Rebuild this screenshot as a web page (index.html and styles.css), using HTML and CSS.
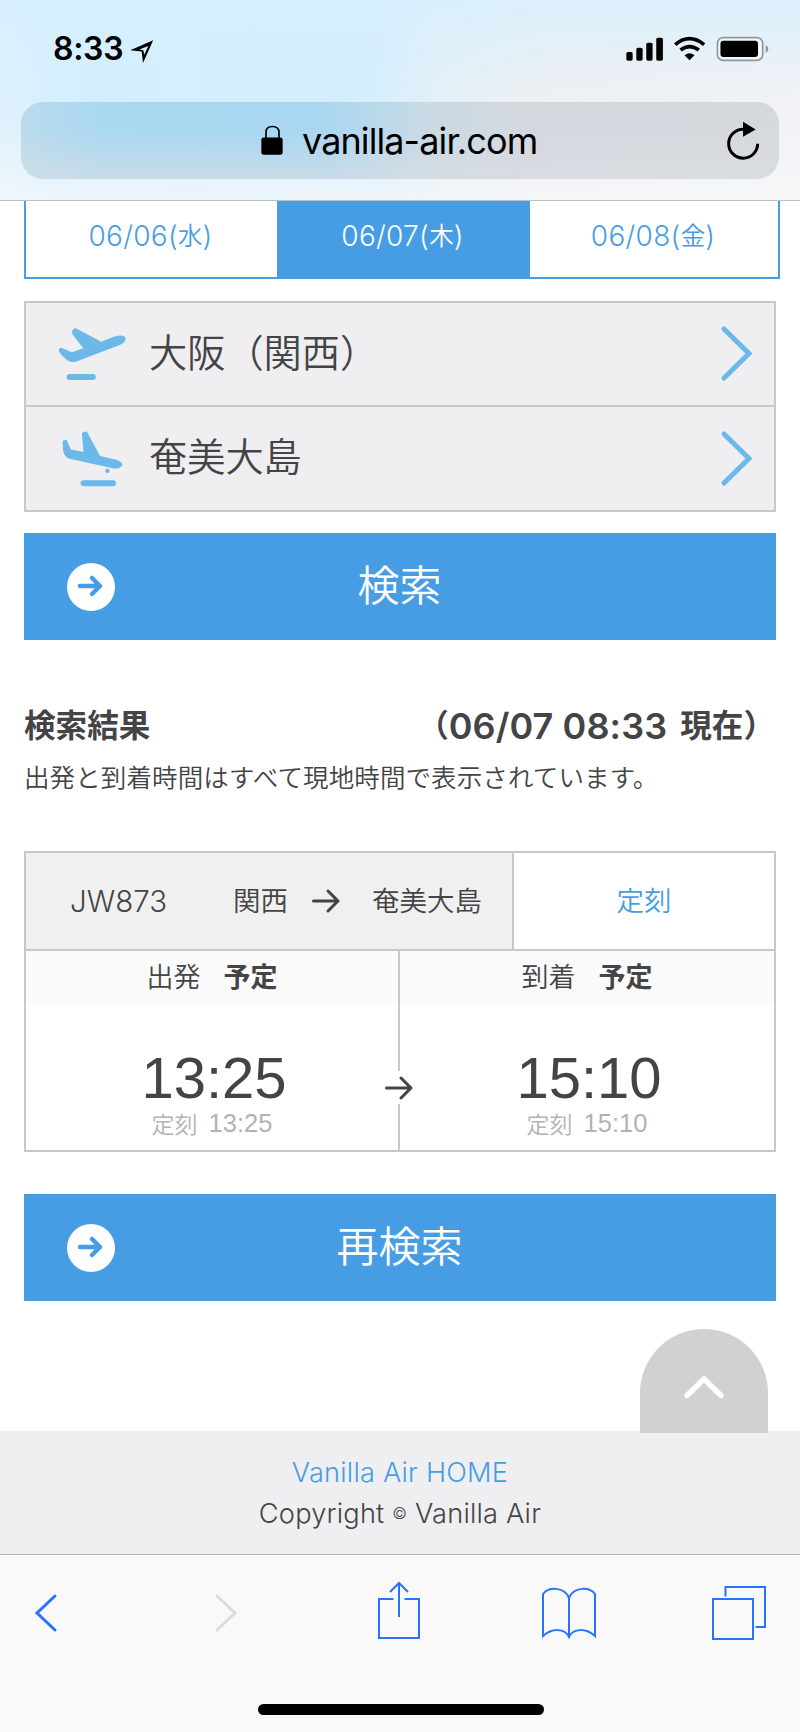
FILE: index.html
```html
<!DOCTYPE html>
<html lang="ja">
<head>
<meta charset="utf-8">
<title>Vanilla Air</title>
<link rel="stylesheet" href="styles.css">
</head>
<body>
<header class="browser-top">
  <div class="status">
    <div class="status-left">
      <span class="clock">8:33</span>
      <svg class="location" viewBox="390 118 72 70"><path fill-rule="evenodd" d="M390 149L460 119L429 188L425 153ZM418 147L430 149L433 163L445 136Z"/></svg>
    </div>
    <svg class="status-icons" viewBox="678 108 430 78">
      <rect x="679" y="156" width="19" height="26" rx="5"/><rect x="709" y="143" width="19" height="39" rx="5"/><rect x="739" y="128" width="19" height="54" rx="5"/><rect x="769" y="113" width="20" height="69" rx="5"/>
      <path class="wifi" d="M826 134Q869 98 913 134M842 150Q869 129 897 150"/>
      <path d="M854 166Q869 154 884 166L869 181Z"/>
      <rect class="battery" x="953" y="113" width="136" height="68" rx="17"/><rect x="962" y="122" width="113" height="49" rx="9"/>
      <path class="battery-tip" d="M1098 135Q1106 139 1106 147Q1106 155 1098 159Z"/>
    </svg>
  </div>
  <div class="address">
    <svg class="lock" viewBox="782 374 66 92"><rect x="783" y="411" width="64" height="52" rx="7"/><path d="M797 413V396Q797 378 816 378Q836 378 836 396V413"/></svg>
    <span class="url">vanilla-air.com</span>
    <svg class="reload" viewBox="980 364 102 116"><path class="ring" d="M1031 388A43.500 43.500 0 1 0 1075 432"/><path d="M1031 366L1069 389L1031 411Z"/></svg>
  </div>
</header>

<main class="page">
  <nav class="dates">
    <a class="date"><span class="num">06/06(</span>水<span class="num">)</span></a>
    <a class="date selected"><span class="num">06/07(</span>木<span class="num">)</span></a>
    <a class="date"><span class="num">06/08(</span>金<span class="num">)</span></a>
  </nav>

  <section class="route">
    <div class="airport">
      <svg class="plane" viewBox="165 108 220 168"><path d="M217 130Q214 119 224 115Q228 114 232 117L304 155L344 139Q374 131 378 145Q379 156 360 165L228 215Q215 219 204 212Q184 198 177 184Q175 174 184 173L216 187L250 175L217 132Z"/><rect x="200" y="252" width="88" height="18" rx="9"/></svg>
      <span>大阪（関西）</span>
      <svg class="chevron" viewBox="0 0 30 54"><path d="M2 2L27 26.500L2 51"/></svg>
    </div>
    <div class="airport">
      <svg class="plane" viewBox="165 424 220 180"><path d="M188 461Q190 455 200 457L213 485L251 493L246 437Q247 432 260 431Q263 433 264 437L301 505L350 516Q367 522 368 532Q364 543 343 543L209 513Q193 510 189 485Z"/><circle cx="323" cy="550" r="6.500"/><rect x="242" y="578" width="107" height="18" rx="9"/></svg>
      <span>奄美大島</span>
      <svg class="chevron" viewBox="0 0 30 54"><path d="M2 2L27 26.500L2 51"/></svg>
    </div>
  </section>

  <button class="search"><svg class="go" viewBox="0 0 48 48"><circle cx="24" cy="24" r="24"/><path d="M13 23H33M25 15L33 23L25 31"/></svg>検索</button>

  <section class="results">
    <div class="results-head"><h1>検索結果</h1><h1 class="asof"><span class="paren">（</span><span class="stamp">06/07 08:33</span><span>現在）</span></h1></div>
    <p class="note">出発と到着時間はすべて現地時間で表示されています。</p>
    <article class="flight">
      <div class="flight-head">
        <div class="flight-route"><span class="code">JW873</span><span class="from">関西</span><svg class="arrow" viewBox="0 0 28 24"><path d="M1.500 12H26M16 2L26 12L16 22"/></svg><span>奄美大島</span></div>
        <div class="flight-status">定刻</div>
      </div>
      <div class="times">
        <div class="leg"><div class="leg-head">出発<b>予定</b></div><div class="time">13:25</div><div class="sched">定刻<span>13:25</span></div></div>
        <div class="leg"><div class="leg-head">到着<b>予定</b></div><div class="time">15:10</div><div class="sched">定刻<span>15:10</span></div></div>
        <div class="between"><svg class="arrow" viewBox="0 0 28 24"><path d="M1.500 12H26M16 2L26 12L16 22"/></svg></div>
      </div>
    </article>
  </section>

  <button class="search again"><svg class="go" viewBox="0 0 48 48"><circle cx="24" cy="24" r="24"/><path d="M13 23H33M25 15L33 23L25 31"/></svg>再検索</button>
</main>

<footer class="footer">
  <a class="to-top"><svg viewBox="0 0 40 24"><path d="M3 20.500L20 4L37 20.500"/></svg></a>
  <a class="home">Vanilla Air HOME</a>
  <p class="copy">Copyright <small>©</small> Vanilla Air</p>
</footer>

<nav class="browser-bottom">
  <div class="tools">
    <svg class="nav-arrow" viewBox="0 0 22 38"><path d="M20 2L2 19L20 36"/></svg>
    <svg class="nav-arrow off" viewBox="0 0 22 38"><path d="M2 2L20 19L2 36"/></svg>
    <svg class="share" viewBox="0 0 42 58"><path d="M15.500 18H1V57H41V18H26.500M21 36V2M12 11L21 2L30 11"/></svg>
    <svg class="book" viewBox="0 0 54 52"><path d="M27 50V11C22-1 6 0 1 7V49C10 41 23 41 27 50C31 41 44 41 53 49V7C48 0 32-1 27 11"/></svg>
    <svg class="tabs" viewBox="0 0 54 54"><path d="M1 13H41V53H1ZM13.500 10.500V1H53V41H43.500"/></svg>
  </div>
  <div class="indicator"></div>
</nav>
</body>
</html>
```

FILE: styles.css
```css
* { box-sizing: border-box; }
body {
  margin: 0;
  width: 800px;
  height: 1732px;
  display: flex;
  flex-direction: column;
  background: #fff;
  color: #444446;
  font-family: "Inter", "Noto Sans CJK JP", sans-serif;
  font-weight: 350;
  overflow: hidden;
}
svg { display: block; flex: none; overflow: visible; }
h1, p { margin: 0; }

.browser-top {
  height: 201px;
  flex: none;
  padding: 0 21px;
  color: #000;
  border-bottom: 1px solid #b9c0c5;
  background:
    linear-gradient(to bottom, rgba(248,249,250,0) 55%, rgba(248,249,250,.65) 100%),
    linear-gradient(to bottom, rgba(213,239,253,.8) 0%, rgba(213,239,253,0) 50%),
    linear-gradient(to right, #def1fc 0, #d3effe 80px, #d5eefd 370px, #e6f0f6 450px, #eff0f3 560px, #f1f2f5 800px);
}
.status { height: 102px; display: flex; justify-content: space-between; align-items: center; padding: 0 10px 4px 32px; }
.status-left { display: flex; align-items: center; gap: 7px; }
.clock { font-size: 32px; font-weight: 600; line-height: 40px; letter-spacing: -.3px; }
.location { width: 24px; height: 23px; margin-top: 5px; }
.status-icons { width: 143px; height: 26px; }
.wifi { fill: none; stroke: #000; stroke-width: 11; }
.battery { fill: rgba(255,255,255,.55); stroke: #8e969b; stroke-width: 5; }
.battery-tip { fill: #8e969b; }
.address {
  height: 77px;
  display: flex;
  align-items: center;
  padding: 0 19px 0 240px;
  border-radius: 22px;
  background:
    linear-gradient(to bottom, rgba(220,222,227,0) 35%, rgba(220,222,227,.6) 100%),
    linear-gradient(to right, #b9dbed 0, #aad8f1 80px, #a9d7f1 300px, #c9dae4 410px, #d4d8de 500px, #d5d9de 758px);
}
.lock { width: 22px; height: 31px; }
.lock path { fill: none; stroke: #000; stroke-width: 5; }
.url { margin-left: 19px; font-size: 36px; font-weight: 400; line-height: 44px; letter-spacing: -.9px; }
.reload { width: 34px; height: 39px; margin-left: auto; }
.ring { fill: none; stroke: #000; stroke-width: 9; }

.page { flex: none; height: 1230px; padding: 0 20px 0 24px; }
.dates { height: 78px; display: grid; grid-template-columns: 251px 253px 1fr; border: 2px solid #479de4; border-top: 0; }
.date { display: flex; justify-content: center; align-items: flex-start; padding: 16px 2px 0 0; font-size: 24.5px; line-height: 38px; color: #479de4; }
.num { font-size: 28px; font-weight: 300; letter-spacing: .3px; }
.selected { background: #479de4; color: #fff; }

.route { width: 752px; height: 211px; margin-top: 22px; border: 2px solid #c8c8ca; background: #efeff1; }
.airport { height: 102px; display: flex; align-items: center; padding: 0 22px 0 29px; font-size: 38.2px; line-height: 56px; }
.airport + .airport { height: 105px; border-top: 2px solid #c8c8ca; }
.plane { width: 73px; height: 60px; fill: #6bb8e9; }
.airport span { margin-left: 21px; padding-bottom: 3px; }
.chevron { width: 30px; height: 54px; margin-left: auto; }
.chevron path { fill: none; stroke: #6bb8e9; stroke-width: 5; stroke-linecap: round; }

.search {
  position: relative;
  width: 752px;
  height: 107px;
  margin: 21px 0 0;
  padding: 0 1px 2px 0;
  border: 0;
  display: flex;
  align-items: center;
  justify-content: center;
  background: #479de4;
  color: #fff;
  font: inherit;
  font-size: 42px;
  line-height: 60px;
}
.go { position: absolute; left: 43px; top: 30px; width: 48px; height: 48px; }
.go circle { fill: #fff; }
.go path { fill: none; stroke: #479de4; stroke-width: 4.5; stroke-linecap: round; stroke-linejoin: round; }

.results { width: 752px; padding-top: 62px; }
.results-head { display: flex; justify-content: space-between; align-items: center; height: 48px; }
h1 { font-size: 31.6px; line-height: 48px; font-weight: 700; }
.asof { display: flex; align-items: center; margin-right: 1px; }
.paren { font-feature-settings: "halt" 1; }
.stamp { font-size: 36px; font-weight: 600; margin-right: 13px; letter-spacing: .1px; }
.note { margin-top: 8px; font-size: 25.5px; line-height: 40px; letter-spacing: .12px; }
.flight { height: 301px; margin-top: 53px; border: 2px solid #c8c8ca; }
.flight-head { height: 98px; display: flex; border-bottom: 2px solid #c8c8ca; font-size: 27.5px; line-height: 40px; }
.flight-route { width: 488px; display: flex; align-items: center; padding: 0 0 1px 44px; background: #f0f0f0; border-right: 2px solid #c8c8ca; }
.code { width: 163px; font-size: 29.5px; font-weight: 300; }
.arrow { width: 28px; height: 24px; }
.arrow path { fill: none; stroke: #444446; stroke-width: 3; stroke-linecap: round; stroke-linejoin: round; }
.flight-route .arrow { margin: 0 32px 0 24px; }
.flight-status { flex: 1; display: flex; align-items: center; justify-content: center; padding-bottom: 1px; color: #479de4; }
.times { position: relative; height: 199px; display: grid; grid-template-columns: 374px 374px; }
.leg { text-align: center; }
.leg:first-child { border-right: 2px solid #c8c8ca; }
.leg-head { height: 53px; display: flex; justify-content: center; gap: 23px; background: #fafafa; font-size: 27px; line-height: 53px; }
.leg-head b { font-weight: 700; }
.time { margin-top: 38px; height: 70px; padding-left: 4px; font-family: "Liberation Sans", sans-serif; font-size: 58px; line-height: 72px; }
.sched { display: flex; justify-content: center; align-items: center; gap: 11px; height: 24px; padding-bottom: 3px; font-size: 23px; color: #b2b2b3; }
.sched span { padding-top: 2px; font-family: "Liberation Sans", sans-serif; font-size: 25.5px; }
.between { position: absolute; left: 355px; top: 120px; width: 36px; height: 33px; display: flex; align-items: center; justify-content: center; background: #fff; }
.again { margin-top: 42px; }

.footer { position: relative; flex: none; height: 124px; padding-top: 22px; border-bottom: 1px solid #b4b4b8; background: #efeff1; text-align: center; font-size: 27.2px; font-weight: 300; line-height: 40px; letter-spacing: .2px; }
.home { display: block; color: #479de4; }
.copy small { font-size: 16px; vertical-align: 4px; }
.to-top { position: absolute; right: 32px; top: -102px; width: 128px; height: 104px; padding: 46px 44px 0; border-radius: 64px 64px 0 0; background: #d1d1d3; }
.to-top path { fill: none; stroke: #fff; stroke-width: 5.5; stroke-linecap: round; stroke-linejoin: round; }

.browser-bottom { flex: 1; background: #f9f9fa; padding: 25px 33px 17px 35px; display: flex; flex-direction: column; justify-content: space-between; align-items: center; }
.tools { width: 100%; height: 66px; display: flex; align-items: center; }
.tools path { fill: none; stroke: #2971ff; stroke-width: 2; }
.nav-arrow { width: 22px; height: 38px; }
.tools .nav-arrow path { stroke-width: 3; stroke-linecap: round; }
.tools .off path { stroke: #dcdcdd; }
.off { margin-left: 158px; }
.share { width: 42px; height: 58px; margin: 0 122px 6px 141px; }
.book { width: 54px; height: 52px; }
.tabs { width: 54px; height: 54px; margin-left: 116px; }
.indicator { width: 286px; height: 11px; border-radius: 6px; background: #000; }
```
